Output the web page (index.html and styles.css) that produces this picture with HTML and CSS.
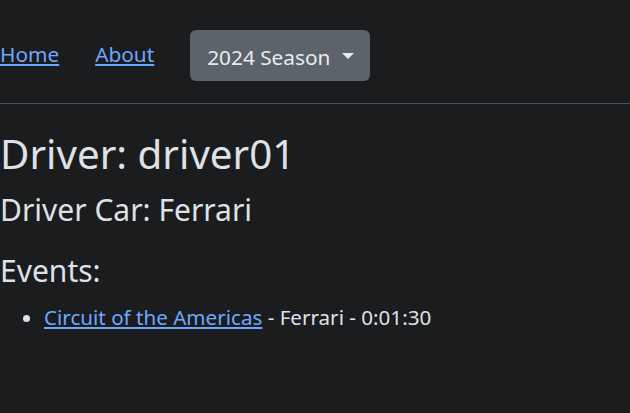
FILE: index.html
```html
<!DOCTYPE html>
<html lang="en">
<head>
<meta charset="utf-8">
<title>Driver</title>
<link rel="stylesheet" href="styles.css">
</head>
<body>
<nav class="topnav">
  <a class="nav-link" href="#">Home</a>
  <a class="nav-link" href="#">About</a>
  <button class="season-btn" type="button">2024 Season <span class="caret"></span></button>
</nav>
<main class="content">
  <h1 class="title">Driver: driver01</h1>
  <h2 class="car">Driver Car: Ferrari</h2>
  <h3 class="events-title">Events:</h3>
  <ul class="events">
    <li><a href="#">Circuit of the Americas</a> - Ferrari - 0:01:30</li>
  </ul>
</main>
</body>
</html>
```
FILE: styles.css
```css
html, body {
  margin: 0;
  padding: 0;
  background: #1b1c1e;
  color: #dee2e6;
  font-family: "Noto Sans", "Open Sans", sans-serif;
  font-size: 20.6px;
}
a {
  color: #6ea8fe;
}
.topnav {
  display: flex;
  align-items: center;
  gap: 36px;
  padding: 30px 0 22px 0;
  border-bottom: 1px solid #495057;
}
.nav-link {
  font-size: 20.8px;
  padding-bottom: 4px;
}
.season-btn {
  display: inline-flex;
  align-items: center;
  height: 51px;
  padding: 2px 16px 0 17px;
  background: #5c636a;
  color: #e9ecef;
  border: none;
  border-radius: 6px;
  font-family: inherit;
  font-size: 20.8px;
}
.caret {
  display: inline-block;
  margin-left: 12px;
  margin-top: -2px;
  width: 0;
  height: 0;
  border-left: 6px solid transparent;
  border-right: 6px solid transparent;
  border-top: 6px solid #e9ecef;
}
.content {
  padding: 0;
}
.title {
  margin: 26px 0 0 0;
  font-size: 40.3px;
  font-weight: 400;
  line-height: 48px;
}
.car {
  margin: 14px 0 0 0;
  font-size: 30px;
  font-weight: 400;
  line-height: 36px;
}
.events-title {
  margin: 25px 0 0 0;
  font-size: 30px;
  font-weight: 400;
  line-height: 36px;
}
.events {
  margin: 13px 0 0 0;
  padding-left: 44px;
  line-height: 31px;
}
```
